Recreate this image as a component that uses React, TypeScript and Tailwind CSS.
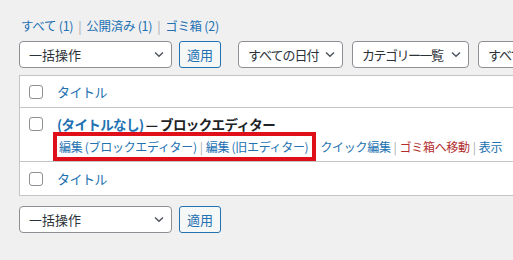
import React from "react";

const Chevron = () => (
  <svg width="10" height="7" viewBox="0 0 10 7" className="shrink-0">
    <path d="M1 1.5 L5 5.2 L9 1.5" fill="none" stroke="#50575e" strokeWidth="1.5" />
  </svg>
);

const Select = ({ label, w, track = "" }: { label: string; w: string; track?: string }) => (
  <div
    className={`${w} h-[27px] flex items-center justify-between pl-[9px] pr-[7px] bg-white border border-[#8c8f94] rounded-[4px] text-[13px] text-[#2c3338] shrink-0`}
  >
    <span className={`whitespace-nowrap ${track}`}>{label}</span>
    <Chevron />
  </div>
);

const Apply = () => (
  <div className="w-[42px] h-[27px] flex items-center justify-center border border-[#2271b1] rounded-[3px] bg-[#f6f7f7] text-[#2271b1] text-[13px] shrink-0">
    適用
  </div>
);

const Check = () => (
  <div className="w-[14px] h-[14px] border border-[#8c8f94] rounded-[3px] bg-white shrink-0" />
);

const Sep = () => <span className="text-[#a7aaad] mx-[3px]">|</span>;

export default function App() {
  return (
    <div
      className="w-[513px] h-[260px] overflow-hidden bg-[#f0f0f1] pl-[19px] pt-[16px]"
      style={{ fontFamily: '"Noto Sans CJK JP", "Noto Sans", sans-serif' }}
    >
      <div className="h-[20px] flex items-center text-[12.5px] text-[#50575e] pl-[2px] tracking-[-0.3px]">
        <span className="text-[#2271b1]">すべて <span>(1)</span></span>
        <span className="mx-[5px] text-[#a7aaad]">|</span>
        <span className="text-[#2271b1]">公開済み <span>(1)</span></span>
        <span className="mx-[5px] text-[#a7aaad]">|</span>
        <span className="text-[#2271b1]">ゴミ箱 <span>(2)</span></span>
      </div>
      <div className="mt-[5px] flex items-center gap-[7px] whitespace-nowrap">
        <Select label="一括操作" w="w-[153px]" />
        <Apply />
        <div className="w-[3px] shrink-0" />
        <div className="flex items-center gap-[9px]">
          <Select label="すべての日付" w="w-[105px]" track="tracking-[-1px]" />
          <Select label="カテゴリー一覧" w="w-[117px]" track="tracking-[-1.5px]" />
          <Select label="すべて" w="w-[120px]" track="tracking-[-1px]" />
        </div>
      </div>
      <div className="mt-[7px] w-[520px] bg-white border border-[#c3c4c7] border-r-0">
        <div className="h-[32px] flex items-center pl-[9px] border-b border-[#c3c4c7]">
          <Check />
          <span className="ml-[14px] text-[13px] text-[#2271b1] tracking-[-0.5px]">タイトル</span>
        </div>
        <div className="h-[54px] pl-[9px] pt-[6px] border-b border-[#c3c4c7]">
          <div className="flex items-center">
            <Check />
            <span className="ml-[14px] text-[13.5px] font-bold text-[#2271b1] tracking-[-0.6px]">
              (タイトルなし)
              <span className="text-[#1d2327]"> — ブロックエディター</span>
            </span>
          </div>
          <div className="mt-[4px] ml-[30px] flex items-center text-[12px] whitespace-nowrap tracking-[-0.3px]">
            <span className="relative">
              <span className="absolute -left-[6px] -right-[8px] -top-[6px] -bottom-[5px] border-[4px] border-[#e0101a]" />
              <span className="text-[#2271b1]">編集 (ブロックエディター)</span>
              <Sep />
              <span className="text-[#2271b1]">編集 (旧エディター)</span>
            </span>
            <span className="ml-[12px] text-[#2271b1]">クイック編集</span>
            <Sep />
            <span className="text-[#b32d2e]">ゴミ箱へ移動</span>
            <Sep />
            <span className="text-[#2271b1]">表示</span>
          </div>
        </div>
        <div className="h-[33px] flex items-center pl-[9px]">
          <Check />
          <span className="ml-[14px] text-[13px] text-[#2271b1] tracking-[-0.5px]">タイトル</span>
        </div>
      </div>
      <div className="mt-[10px] flex items-center gap-[7px]">
        <Select label="一括操作" w="w-[153px]" />
        <Apply />
      </div>
    </div>
  );
}
